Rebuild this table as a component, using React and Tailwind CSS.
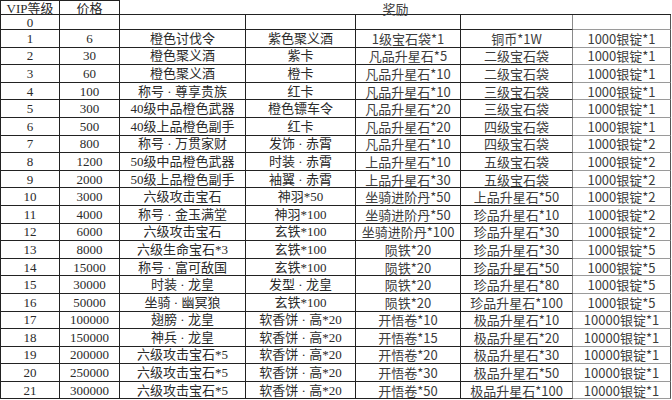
const rows = [
  ["0", "", "", "", "", "", ""],
  ["1", "6", "橙色讨伐令", "紫色聚义酒", "1级宝石袋*1", "铜币*1W", "1000银锭*1"],
  ["2", "30", "橙色聚义酒", "紫卡", "凡品升星石*5", "二级宝石袋", "1000银锭*1"],
  ["3", "60", "橙色聚义酒", "橙卡", "凡品升星石*10", "二级宝石袋", "1000银锭*1"],
  ["4", "100", "称号 · 尊享贵族", "红卡", "凡品升星石*10", "三级宝石袋", "1000银锭*1"],
  ["5", "300", "40级中品橙色武器", "橙色镖车令", "凡品升星石*20", "三级宝石袋", "1000银锭*1"],
  ["6", "500", "40级上品橙色副手", "红卡", "凡品升星石*20", "四级宝石袋", "1000银锭*1"],
  ["7", "800", "称号 · 万贯家财", "发饰 · 赤霄", "凡品升星石*10", "四级宝石袋", "1000银锭*2"],
  ["8", "1200", "50级中品橙色武器", "时装 · 赤霄", "上品升星石*10", "五级宝石袋", "1000银锭*2"],
  ["9", "2000", "50级上品橙色副手", "袖翼 · 赤霄", "上品升星石*30", "五级宝石袋", "1000银锭*2"],
  ["10", "3000", "六级攻击宝石", "神羽*50", "坐骑进阶丹*50", "上品升星石*50", "1000银锭*2"],
  ["11", "4000", "称号 · 金玉满堂", "神羽*100", "坐骑进阶丹*50", "珍品升星石*10", "1000银锭*2"],
  ["12", "6000", "六级攻击宝石", "玄铁*100", "坐骑进阶丹*100", "珍品升星石*30", "1000银锭*2"],
  ["13", "8000", "六级生命宝石*3", "玄铁*100", "陨铁*20", "珍品升星石*30", "1000银锭*5"],
  ["14", "15000", "称号 · 富可敌国", "玄铁*100", "陨铁*20", "珍品升星石*50", "1000银锭*5"],
  ["15", "30000", "时装 · 龙皇", "发型 · 龙皇", "陨铁*20", "珍品升星石*80", "1000银锭*5"],
  ["16", "50000", "坐骑 · 幽冥狼", "玄铁*100", "陨铁*20", "珍品升星石*100", "1000银锭*5"],
  ["17", "100000", "翅膀 · 龙皇", "软香饼 · 高*20", "开悟卷*10", "极品升星石*10", "10000银锭*1"],
  ["18", "150000", "神兵 · 龙皇", "软香饼 · 高*20", "开悟卷*15", "极品升星石*20", "10000银锭*1"],
  ["19", "200000", "六级攻击宝石*5", "软香饼 · 高*20", "开悟卷*20", "极品升星石*30", "10000银锭*1"],
  ["20", "250000", "六级攻击宝石*5", "软香饼 · 高*20", "开悟卷*30", "极品升星石*50", "10000银锭*1"],
  ["21", "300000", "六级攻击宝石*5", "软香饼 · 高*20", "开悟卷*50", "极品升星石*100", "10000银锭*1"],
];

// left columns: SimSun-like (serif latin), right columns: YaHei-like sans
const serif = "font-['Liberation_Serif','Noto_Sans_CJK_SC',serif] text-[#2a2a2a]";
const sans = "font-['Noto_Sans_CJK_SC','Liberation_Sans',sans-serif] text-[#3c3c3c]";

const App = () => {
  return (
    <div className="w-[672px] h-[400px] bg-white overflow-hidden text-[13px] leading-none">
      <div className="grid grid-cols-[60px_60px_126px_110px_105px_112px_98px]">
        {/* header */}
        <div className={`h-[15px] border-l border-t border-r border-b border-[#222] flex items-center justify-center pt-px ${serif}`}>
          VIP等级
        </div>
        <div className={`h-[15px] border-t border-r border-b border-[#222] flex items-center justify-center pt-px ${serif}`}>
          价格
        </div>
        <div className={`col-span-5 h-[15px] border-b border-[#222] flex items-center justify-center pt-[2px] ${sans}`}>
          奖励
        </div>

        {rows.map((row, i) => (
          <div key={row[0]} className="contents">
            {row.map((cell, j) => (
              <div
                key={j}
                className={`${i === 0 ? "h-[15px]" : "h-[17.6px]"} border-b border-r flex items-center justify-center whitespace-nowrap ${
                  j === 0 ? "border-l" : ""
                } ${j === 5 ? "border-r-[#8a8a8a]" : ""} ${
                  j === 6 ? "border-b-[#9a9a9a] border-r-[#555]" : "border-b-[#222]"
                } ${j === 0 ? "border-l-[#222]" : ""} border-[#222] ${j < 4 ? serif : sans}`}
              >
                {cell}
              </div>
            ))}
          </div>
        ))}
      </div>
    </div>
  );
};

export default App;
